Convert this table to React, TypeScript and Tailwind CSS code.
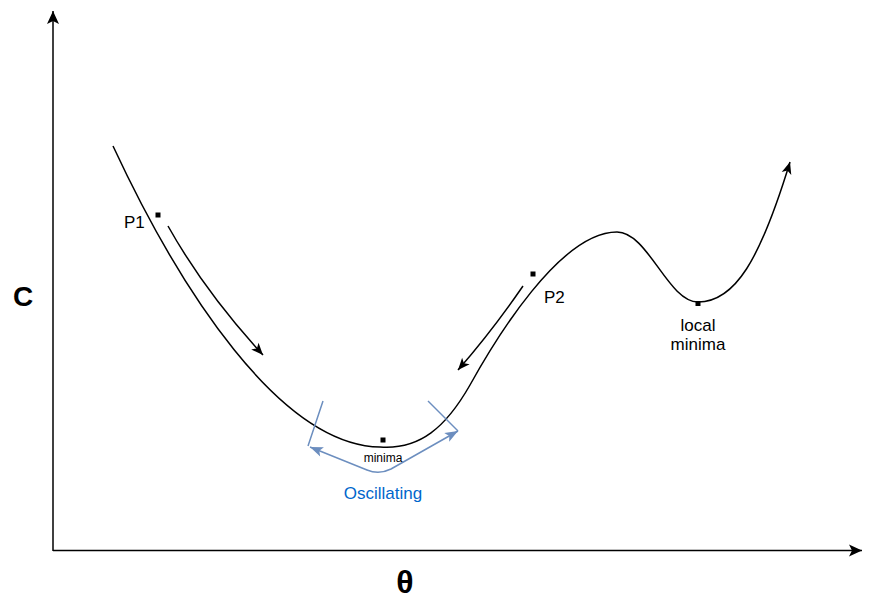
import React from "react";

const mainPath =
  "M113,146 C180,290 280,445 380,447" +
  " C420,450 446,427 470,385" +
  " C495,340 560,232 617,232" +
  " C648,232 668,302 698,302" +
  " C735,302 760,260 790,162";

const font = '"Liberation Sans", Arial, Helvetica, sans-serif';

export default function App() {
  return (
    <div className="w-[876px] h-[602px] bg-white overflow-hidden">
      <svg width="876" height="602" viewBox="0 0 876 602" className="block">
        <defs>
          <marker
            id="arrBlack"
            markerWidth="14"
            markerHeight="12"
            refX="13"
            refY="6"
            orient="auto"
            markerUnits="userSpaceOnUse"
          >
            <path d="M1,1 L13,6 L1,11 L4,6 Z" fill="#000" />
          </marker>
          <marker
            id="arrAxis"
            markerWidth="15"
            markerHeight="14"
            refX="14"
            refY="7"
            orient="auto"
            markerUnits="userSpaceOnUse"
          >
            <path d="M1,1 L14,7 L1,13 L4,7 Z" fill="#000" />
          </marker>
          <marker
            id="arrBlue"
            markerWidth="15"
            markerHeight="12"
            refX="14"
            refY="6"
            orient="auto-start-reverse"
            markerUnits="userSpaceOnUse"
          >
            <path d="M1,1 L14,6 L1,11 L4,6 Z" fill="#6c8ebf" />
          </marker>
        </defs>

        {/* Axes */}
        <line x1="53" y1="551" x2="53" y2="11" stroke="#000" strokeWidth="1.5" markerEnd="url(#arrAxis)" />
        <line x1="53" y1="550.5" x2="862" y2="550.5" stroke="#000" strokeWidth="1.5" markerEnd="url(#arrAxis)" />

        {/* Main cost curve */}
        <path d={mainPath} fill="none" stroke="#000" strokeWidth="1.5" markerEnd="url(#arrBlack)" />

        {/* P1 arrow */}
        <path d="M168,226 Q205,292 263,355" fill="none" stroke="#000" strokeWidth="1.5" markerEnd="url(#arrBlack)" />
        {/* P2 arrow */}
        <path d="M523,286 Q492,331 458,370" fill="none" stroke="#000" strokeWidth="1.5" markerEnd="url(#arrBlack)" />

        {/* Oscillation */}
        <line x1="323" y1="401" x2="308" y2="446" stroke="#6c8ebf" strokeWidth="1.5" />
        <line x1="428" y1="401" x2="458" y2="431" stroke="#6c8ebf" strokeWidth="1.5" />
        <path
          d="M310,447 L367,470 Q379,475 391,469 L458,431"
          fill="none"
          stroke="#6c8ebf"
          strokeWidth="1.5"
          markerStart="url(#arrBlue)"
          markerEnd="url(#arrBlue)"
        />

        {/* Point markers */}
        <rect x="155.5" y="212.5" width="5" height="5" fill="#000" />
        <rect x="530.5" y="271.5" width="5" height="5" fill="#000" />
        <rect x="380.5" y="437.5" width="5" height="5" fill="#000" />
        <rect x="695.5" y="301" width="5" height="5" fill="#000" />

        {/* Labels */}
        <text x="124" y="228" fontFamily={font} fontSize="17" fill="#000">P1</text>
        <text x="544" y="303" fontFamily={font} fontSize="17" fill="#000">P2</text>
        <text x="698" y="331" fontFamily={font} fontSize="17" fill="#000" textAnchor="middle">local</text>
        <text x="698" y="350" fontFamily={font} fontSize="17" fill="#000" textAnchor="middle">minima</text>
        <text x="383" y="462" fontFamily={font} fontSize="12" fill="#000" textAnchor="middle">minima</text>
        <text x="383" y="499" fontFamily={font} fontSize="17" fill="#0066cc" textAnchor="middle">Oscillating</text>
        <text x="23" y="306" fontFamily={font} fontSize="28" fontWeight="bold" fill="#000" textAnchor="middle">C</text>
        <text x="405" y="593" fontFamily={font} fontSize="32" fontWeight="bold" fill="#000" textAnchor="middle">θ</text>
      </svg>
    </div>
  );
}
